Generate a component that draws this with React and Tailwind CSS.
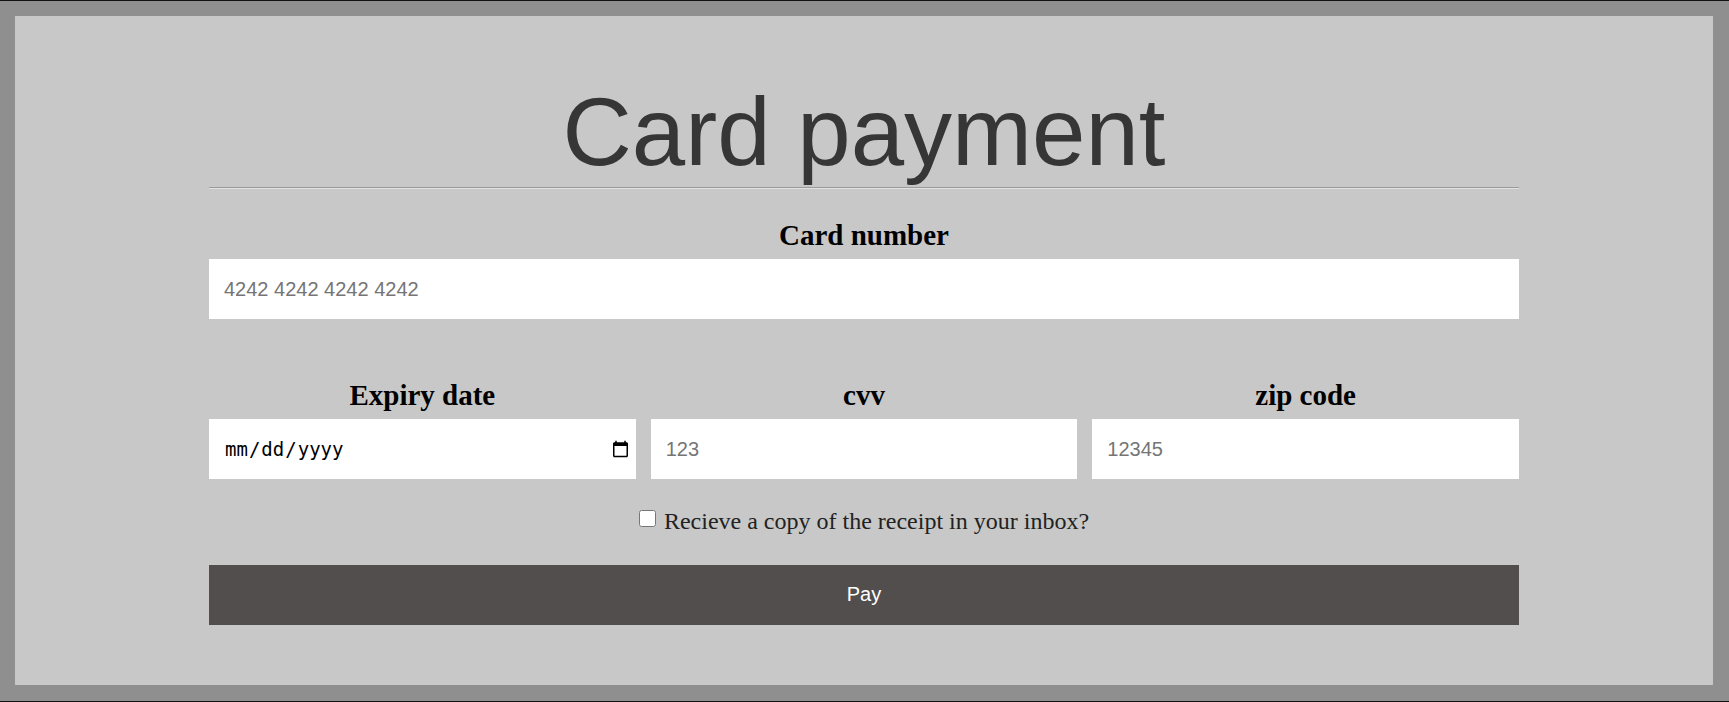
import React, { useState } from 'react';

export default function App() {
  const [copy, setCopy] = useState(false);

  const inputClass =
    "w-full h-[60px] bg-white px-[15px] text-[20px] text-[#222] placeholder:text-[#757575] outline-none font-['Liberation_Sans',Arial,sans-serif]";
  const labelClass =
    "block text-center text-[29px] leading-[32px] font-bold text-black mb-[8px] font-['Liberation_Serif','Times_New_Roman',serif]";

  return (
    <div className="w-full h-[702px] bg-[#8f8f8f] border-t border-b border-[#111] pl-[15px] pr-[16px] pt-[15px] pb-[16px]">
      <div className="h-full bg-[#c8c8c8] pt-[61px]">
        <div className="w-[1310px] mx-auto">
          <h1 className="text-center text-[96px] leading-[110px] text-[#363636] font-['Liberation_Sans',Arial,sans-serif]">
            Card payment
          </h1>
          <div className="h-0 border-t border-b border-t-[#9a9a9a] border-b-[#e2e2e2]" />

          <div className="mt-[30px]">
            <label className={labelClass}>Card number</label>
            <input type="text" placeholder="4242 4242 4242 4242" className={inputClass} />
          </div>

          <div className="mt-[60px] grid grid-cols-3 gap-x-[15px]">
            <div>
              <label className={labelClass}>Expiry date</label>
              <input
                type="date"
                className="w-full h-[60px] bg-white pl-[15px] pr-[4px] text-[19px] text-black outline-none font-['DejaVu_Sans_Mono',monospace]"
              />
            </div>
            <div>
              <label className={labelClass}>cvv</label>
              <input type="text" placeholder="123" className={inputClass} />
            </div>
            <div>
              <label className={labelClass}>zip code</label>
              <input type="text" placeholder="12345" className={inputClass} />
            </div>
          </div>

          <div className="mt-[28px] flex justify-center items-start gap-[8px]">
            <input
              type="checkbox"
              checked={copy}
              onChange={() => setCopy(!copy)}
              className="w-[17px] h-[17px] mt-[3px] m-0"
            />
            <span className="text-[24px] leading-[28px] text-[#222] font-['Liberation_Serif','Times_New_Roman',serif]">
              Recieve a copy of the receipt in your inbox?
            </span>
          </div>

          <button className="mt-[30px] w-full h-[60px] pb-[2px] bg-[#524e4d] text-white text-[20px] font-['Liberation_Sans',Arial,sans-serif]">
            Pay
          </button>
        </div>
      </div>
    </div>
  );
}
